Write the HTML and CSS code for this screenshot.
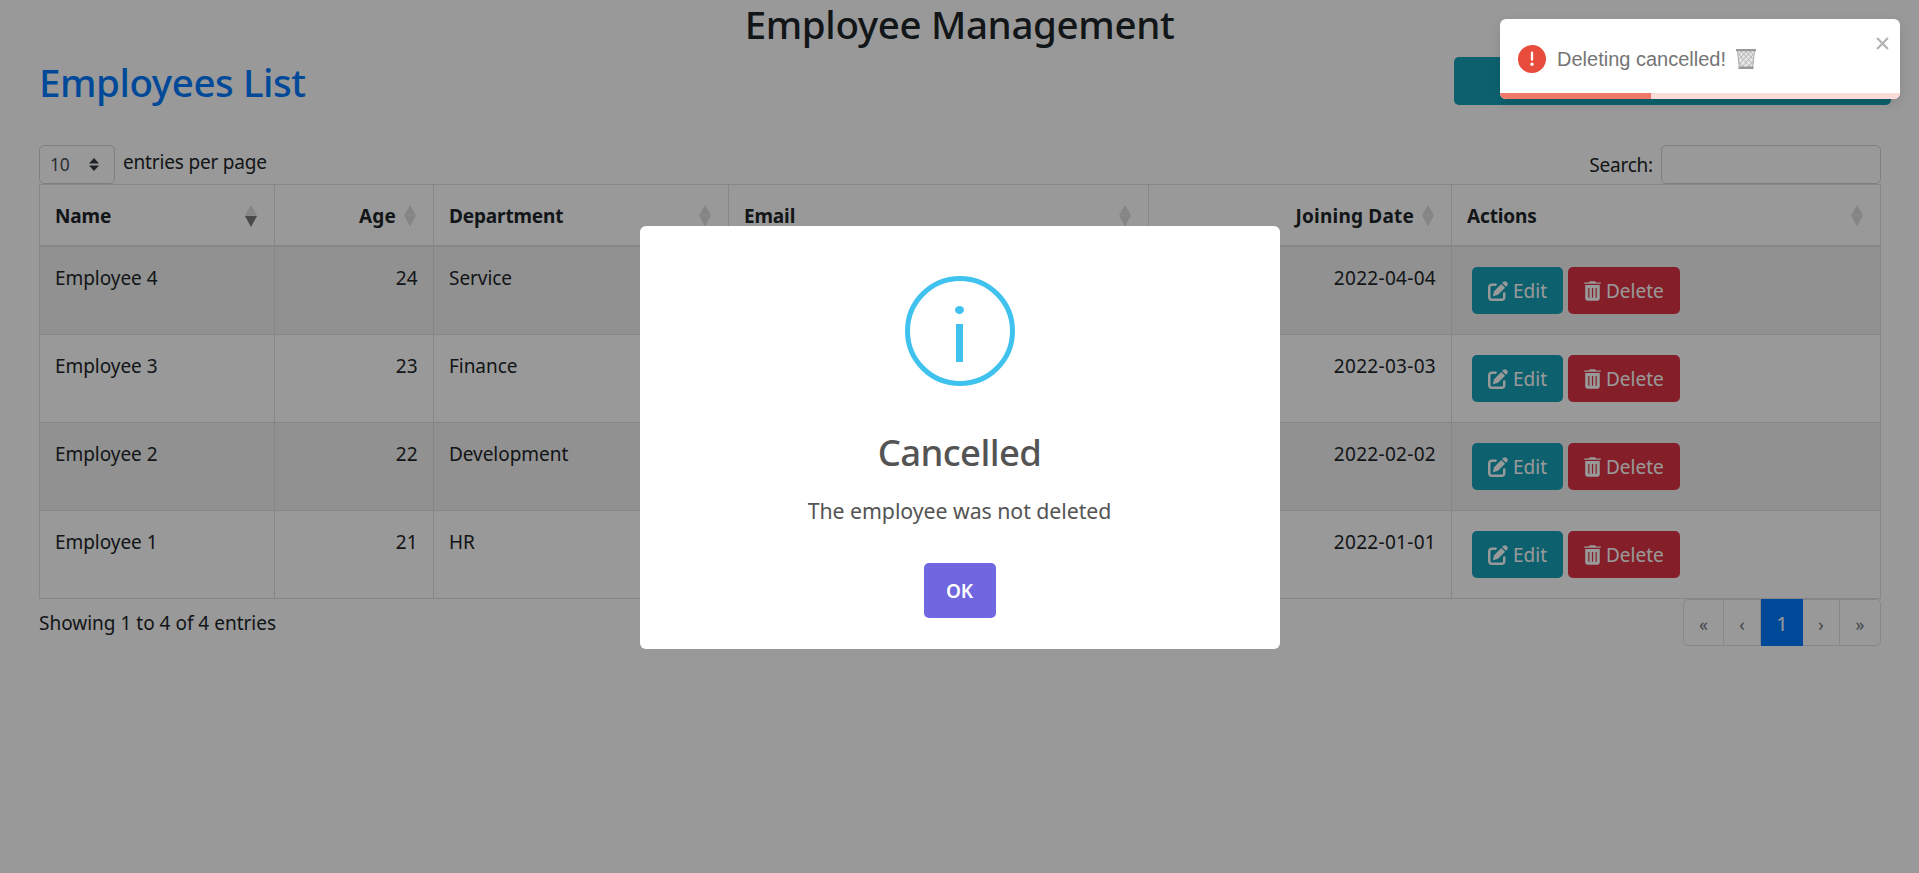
FILE: index.html
```html
<!DOCTYPE html>
<html lang="en">
<head>
<meta charset="utf-8">
<title>Employee Management</title>
<link rel="stylesheet" href="styles.css">
</head>
<body>
<svg class="defs" aria-hidden="true">
  <symbol id="edit" viewBox="0 0 512 512"><path d="M471.6 21.7c-21.900-21.900-57.300-21.900-79.200 0L362.300 51.700l97.900 97.900 30.100-30.100c21.900-21.900 21.900-57.300 0-79.200L471.600 21.700zm-299.200 220c-6.100 6.100-10.800 13.600-13.500 21.900l-29.600 88.800c-2.900 8.600-.6 18.100 5.800 24.600s15.900 8.700 24.600 5.800l88.800-29.600c8.200-2.700 15.700-7.400 21.900-13.500L437.700 172.300 339.700 74.300 172.400 241.700zM96 64C43 64 0 107 0 160V416c0 53 43 96 96 96H352c53 0 96-43 96-96V320c0-17.700-14.300-32-32-32s-32 14.300-32 32v96c0 17.700-14.300 32-32 32H96c-17.700 0-32-14.300-32-32V160c0-17.700 14.300-32 32-32h96c17.700 0 32-14.300 32-32s-14.300-32-32-32H96z"/></symbol>
  <symbol id="trash" viewBox="0 0 448 512"><path fill-rule="evenodd" d="M135.200 17.700C140.600 6.800 151.700 0 163.800 0h120.400c12.100 0 23.200 6.800 28.600 17.700L320 32h96c17.700 0 32 14.300 32 32H0c0-17.700 14.300-32 32-32h96zM32 96h384v352c0 35.300-28.700 64-64 64H96c-35.300 0-64-28.700-64-64zM112 176v256h32V176zM208 176v256h32V176zM304 176v256h32V176z"/></symbol>
  <symbol id="sort" viewBox="0 0 12 22"><path d="M0 10.500L6 0l6 10.500z"/><path class="down" d="M0 10.500h12L6 21.500z"/></symbol>
</svg>

<main class="page">
  <h1 class="title">Employee Management</h1>
  <div class="list-head">
    <h2 class="list-title">Employees List</h2>
    <button class="add-btn" aria-label="Add employee"></button>
  </div>

  <div class="controls">
    <label class="length">
      <span class="select">10
        <svg width="10" height="13" viewBox="0 0 10 13"><path d="M5 0l5 5.500H0zM5 13L0 7.500h10z"/></svg>
      </span>
      entries per page
    </label>
    <label class="search">Search: <input class="search-input" type="text"></label>
  </div>

  <table class="grid">
    <colgroup><col class="c-name"><col class="c-age"><col class="c-dept"><col class="c-email"><col class="c-date"><col class="c-act"></colgroup>
    <thead>
      <tr>
        <th><div class="th">Name <svg class="sort sorted"><use href="#sort"/></svg><svg class="sort-active" viewBox="0 0 12 11"><path d="M0 0h12L6 11z"/></svg></div></th>
        <th><div class="th num">Age <svg class="sort"><use href="#sort"/></svg></div></th>
        <th><div class="th">Department <svg class="sort"><use href="#sort"/></svg></div></th>
        <th><div class="th">Email <svg class="sort"><use href="#sort"/></svg></div></th>
        <th><div class="th num">Joining Date <svg class="sort"><use href="#sort"/></svg></div></th>
        <th><div class="th">Actions <svg class="sort"><use href="#sort"/></svg></div></th>
      </tr>
    </thead>
    <tbody>
      <tr><td>Employee 4</td><td class="right">24</td><td>Service</td><td></td><td class="right">2022-04-04</td>
        <td><div class="actions"><button class="btn edit"><svg class="i-edit"><use href="#edit"/></svg>Edit</button><button class="btn delete"><svg class="i-trash"><use href="#trash"/></svg>Delete</button></div></td></tr>
      <tr><td>Employee 3</td><td class="right">23</td><td>Finance</td><td></td><td class="right">2022-03-03</td>
        <td><div class="actions"><button class="btn edit"><svg class="i-edit"><use href="#edit"/></svg>Edit</button><button class="btn delete"><svg class="i-trash"><use href="#trash"/></svg>Delete</button></div></td></tr>
      <tr><td>Employee 2</td><td class="right">22</td><td>Development</td><td></td><td class="right">2022-02-02</td>
        <td><div class="actions"><button class="btn edit"><svg class="i-edit"><use href="#edit"/></svg>Edit</button><button class="btn delete"><svg class="i-trash"><use href="#trash"/></svg>Delete</button></div></td></tr>
      <tr><td>Employee 1</td><td class="right">21</td><td>HR</td><td></td><td class="right">2022-01-01</td>
        <td><div class="actions"><button class="btn edit"><svg class="i-edit"><use href="#edit"/></svg>Edit</button><button class="btn delete"><svg class="i-trash"><use href="#trash"/></svg>Delete</button></div></td></tr>
    </tbody>
  </table>

  <div class="foot">
    <span class="info">Showing 1 to 4 of 4 entries</span>
    <nav class="pages"><span class="pg w40">«</span><span class="pg w37">‹</span><span class="pg active">1</span><span class="pg w37">›</span><span class="pg w40">»</span></nav>
  </div>
</main>

<div class="overlay">
  <section class="modal" role="dialog">
    <div class="info-icon"><i class="dot"></i><i class="stem"></i></div>
    <h2 class="modal-title">Cancelled</h2>
    <p class="modal-text">The employee was not deleted</p>
    <button class="ok">OK</button>
  </section>
</div>

<aside class="toast" role="alert">
  <svg class="toast-icon" viewBox="0 0 24 24"><path d="M11.983 0a12.206 12.206 0 00-8.510 3.653A11.800 11.800 0 000 12.207 11.779 11.779 0 0011.800 24h.214A12.111 12.111 0 0024 11.791 11.766 11.766 0 0011.983 0zM10.500 16.542a1.476 1.476 0 011.449-1.530h.027a1.527 1.527 0 011.523 1.470 1.475 1.475 0 01-1.449 1.530h-.027a1.529 1.529 0 01-1.523-1.470zM11 12.500v-6a1 1 0 012 0v6a1 1 0 11-2 0z"/></svg>
  <span class="toast-text">Deleting cancelled!</span>
  <svg class="basket" viewBox="0 0 20 20">
    <path d="M2 2h16l-1.300 16H3.300z" fill="#e6e6e6"/>
    <path d="M2.500 5L14 18M2.500 13L7.500 18M5 2l11.500 13M9.500 2L17 10.500M14 2l3.500 4M17.500 5L6 18M17.500 12L12.500 18M15 2L3.500 15M10.500 2L3 10.500M6 2L2.500 6" stroke="#b4b4b4" stroke-width="1" fill="none"/>
    <path d="M1.500 2l1.800 16M18.500 2l-1.800 16" stroke="#aaa" fill="none"/>
    <path d="M0 0h20v2.200H0zM2.500 17.500h15V20h-15z" fill="#999"/>
  </svg>
  <svg class="close" viewBox="0 0 12 12"><path d="M1 1l10 10M11 1L1 11"/></svg>
  <div class="progress"><div class="bar"></div></div>
</aside>
</body>
</html>
```
FILE: styles.css
```css
* { box-sizing: border-box; }
body { margin: 0; height: 873px; overflow: hidden; background: #fff; color: #212529; font: 400 19px/30px "Noto Sans", "Open Sans", sans-serif; }
button { font: inherit; border: 0; padding: 0; }
.defs { position: absolute; width: 0; height: 0; }
.title { margin: 0; padding-top: 1px; text-align: center; font-size: 38.5px; line-height: 47px; height: 57px; font-weight: 500; letter-spacing: -.35px; }
.list-head { display: flex; justify-content: space-between; height: 88px; padding: 0 28px 0 39px; }
.list-title { margin: 0; font-size: 38.5px; line-height: 50px; font-weight: 500; letter-spacing: -.42px; color: #007bff; }
.add-btn { width: 437px; height: 48px; border-radius: 5px; background: #17a2b8; }
.controls { display: flex; justify-content: space-between; height: 39px; padding: 0 38px 0 39px; }
.length { display: flex; gap: 8px; line-height: 35px; letter-spacing: -.18px; }
.select { display: flex; align-items: center; justify-content: space-between; width: 76px; height: 39px; padding: 0 15px 0 10px; border: 1px solid #ced4da; border-radius: 5px; color: #495057; font-size: 17.500px; letter-spacing: -.3px; line-height: 37px; }
.select svg { fill: #343a40; }
.search { display: flex; gap: 8px; line-height: 40px; letter-spacing: -.2px; }
.search-input { width: 220px; height: 39px; border: 1px solid #ced4da; border-radius: 5px; background: #fff; }
.grid { width: 1842px; margin-left: 39px; table-layout: fixed; border-collapse: separate; border-spacing: 0; border-right: 1px solid #dee2e6; }
.c-name { width: 235px; }
.c-age { width: 159px; }
.c-dept { width: 295px; }
.c-email { width: 420px; }
.c-date { width: 303px; }
.c-act { width: 429px; }
th, td { padding: 0 15px; border-left: 1px solid #dee2e6; text-align: left; vertical-align: top; }
th { height: 63px; padding-top: 16px; border-top: 1px solid #dee2e6; border-bottom: 2px solid #dee2e6; font-weight: 700; letter-spacing: -.15px; }
td { height: 88px; padding-top: 16px; border-bottom: 1px solid #dee2e6; letter-spacing: -.05px; }
tbody tr:nth-child(odd) td { background: #f2f2f2; }
td.right { text-align: right; letter-spacing: .3px; }
.th { position: relative; display: flex; justify-content: space-between; }
.num { justify-content: flex-end; gap: 8px; letter-spacing: .2px; }
.sort { width: 12px; height: 22px; margin: 4px 2px 0 0; fill: #dedede; }
.sort-active { position: absolute; right: 2px; top: 14.500px; width: 12px; height: 11px; fill: #7a7a7a; }
.actions { display: flex; gap: 5px; padding: 4px 0 0 5px; }
.btn { display: flex; align-items: center; height: 47px; border-radius: 5px; color: #fff; }
.edit { width: 91px; padding-left: 16px; gap: 5px; background: #17a2b8; }
.delete { width: 112px; padding-left: 16px; gap: 5px; background: #dc3545; }
.i-edit { width: 20px; height: 20px; fill: #fff; }
.i-trash { width: 17px; height: 20px; fill: #fff; }
.foot { display: flex; justify-content: space-between; padding: 0 38px 0 39px; }
.info { line-height: 48px; }
.pages { display: flex; width: 198px; height: 47px; border: 1px solid #dee2e6; border-radius: 5px; }
.pg { border-right: 1px solid #dee2e6; line-height: 48px; text-align: center; color: #6c757d; font-size: 17.500px; }
.pg:last-child { border-right: 0; }
.w40 { width: 40px; }
.w37 { width: 37px; }
.active { width: 42px; height: 47px; margin-top: -1px; border-right: 0; background: #007bff; color: #fff; font-size: 20px; line-height: 49px; }
.overlay { position: absolute; inset: 0; display: flex; align-items: center; justify-content: center; background: rgba(0, 0, 0, .4); }
.modal { display: flex; flex-direction: column; align-items: center; width: 640px; height: 423px; margin-top: 2px; padding-top: 50px; border-radius: 6px; background: #fff; color: #545454; }
.info-icon { display: flex; flex-direction: column; align-items: center; width: 110px; height: 110px; padding-top: 25px; border: 5px solid #3fc3ee; border-radius: 50%; }
.dot { width: 9px; height: 8px; border-radius: 50%; background: #3fc3ee; }
.stem { width: 7px; height: 38px; margin-top: 10px; background: #3fc3ee; }
.modal-title { margin: 41px 0 0; font-size: 36.500px; line-height: 50px; font-weight: 500; letter-spacing: -.6px; }
.modal-text { margin: 19px 0 0; font-size: 21.300px; line-height: 30px; letter-spacing: -.05px; }
.ok { width: 72px; height: 55px; margin-top: 37px; padding-top: 1px; border-radius: 5px; background: #7066e0; color: #fff; font-size: 19px; font-weight: 600; }
.toast { position: absolute; right: 19px; top: 19px; display: flex; align-items: center; width: 400px; height: 80px; padding-left: 18px; border-radius: 6px; background: #fff; box-shadow: 0 4px 12px rgba(0, 0, 0, .1); color: #757575; font: 20px/30px "Liberation Sans", Arial, sans-serif; }
.toast-icon { width: 28px; height: 28px; fill: #e74c3c; }
.toast-text { margin-left: 11px; white-space: nowrap; }
.basket { width: 20px; height: 20px; margin-left: 10px; }
.close { position: absolute; right: 11px; top: 18px; width: 13px; height: 13px; fill: none; stroke: #b2b2b2; stroke-width: 2; }
.progress { position: absolute; left: 0; right: 0; bottom: 0; height: 6px; border-radius: 0 0 6px 6px; overflow: hidden; background: #fadbd8; }
.bar { width: 151px; height: 6px; background: #ef786b; }
```
